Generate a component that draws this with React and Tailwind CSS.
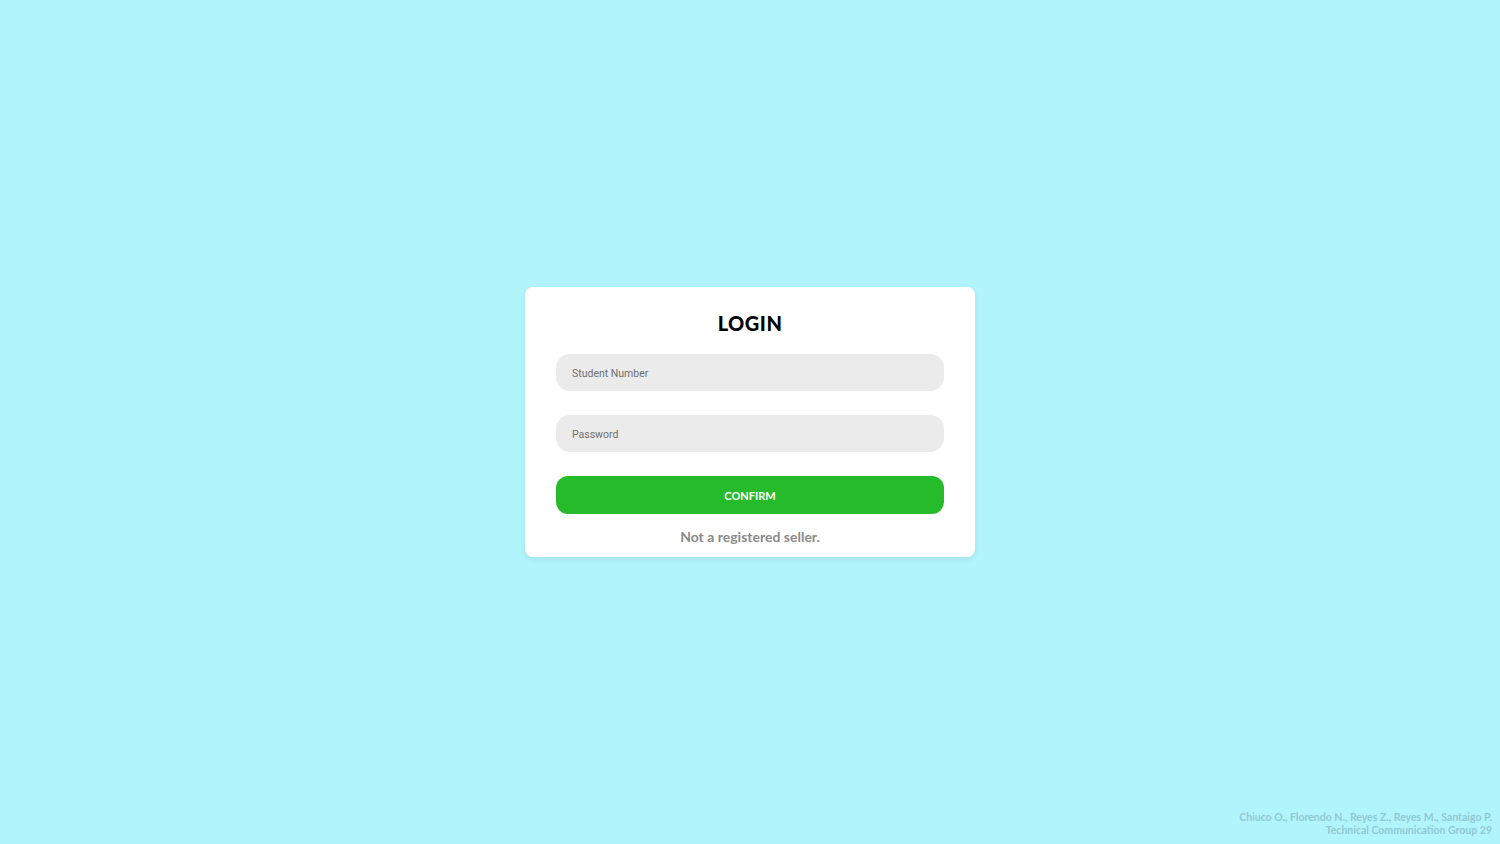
export default function App() {
  return (
    <div className="relative min-h-screen w-full bg-[#b1f4fc] flex items-center justify-center" style={{ fontFamily: 'Lato, "Open Sans", sans-serif' }}>
      <div className="w-[450px] h-[270px] bg-white rounded-lg shadow-[0_2px_6px_rgba(0,0,0,0.08)] px-[31px] pt-[22px] flex flex-col">
        <h1 className="text-center text-[20px] leading-[28px] font-black tracking-[0.5px] text-black">LOGIN</h1>
        <input
          type="text"
          placeholder="Student Number"
          className="mt-[17px] h-[37px] w-full rounded-[14px] bg-[#ebebeb] px-4 pt-[2px] text-[10.5px] text-gray-700 placeholder:text-[#6f6f6f] outline-none"
          style={{ fontFamily: 'Roboto, sans-serif' }}
        />
        <input
          type="password"
          placeholder="Password"
          className="mt-[24px] h-[37px] w-full rounded-[14px] bg-[#ebebeb] px-4 pt-[2px] text-[10.5px] text-gray-700 placeholder:text-[#6f6f6f] outline-none"
          style={{ fontFamily: 'Roboto, sans-serif' }}
        />
        <button className="mt-[24px] h-[38px] w-full rounded-[12px] bg-[#25bb2a] text-white text-[11px] font-bold pt-[2px]">
          CONFIRM
        </button>
        <p className="mt-[13px] text-center text-[14px] leading-[20px] font-bold text-[#8a8a8a]">Not a registered seller.</p>
      </div>
      <div className="absolute right-2 bottom-[7px] text-right text-[10.5px] leading-[13px] font-bold text-[#8fcad3]">
        <p>Chiuco O., Florendo N., Reyes Z., Reyes M., Santaigo P.</p>
        <p>Technical Communication Group 29</p>
      </div>
    </div>
  );
}
